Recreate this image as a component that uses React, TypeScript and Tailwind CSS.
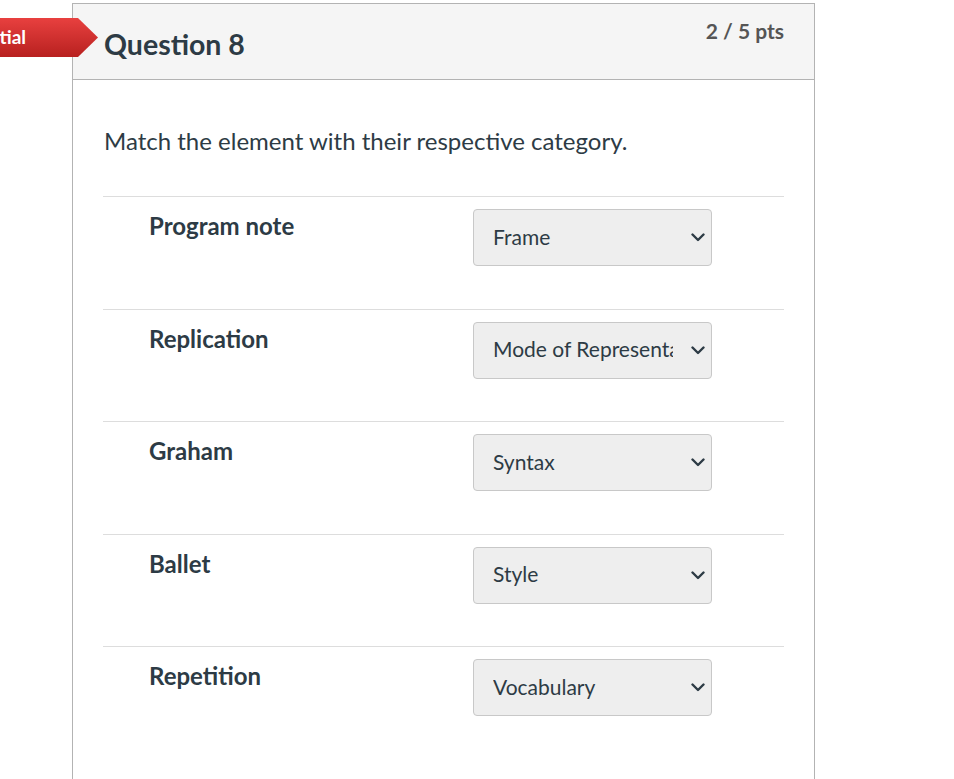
const rows = [
  { label: "Program note", value: "Frame" },
  { label: "Replication", value: "Mode of Representation" },
  { label: "Graham", value: "Syntax" },
  { label: "Ballet", value: "Style" },
  { label: "Repetition", value: "Vocabulary" },
];

function Ribbon() {
  return (
    <div
      className="absolute left-[-80px] top-[18px] flex h-[39px] w-[178px] items-center justify-end bg-gradient-to-b from-[#e8403f] to-[#b8201f] pr-[72px] text-[19px] font-bold text-white"
      style={{ clipPath: "polygon(0 0, 158px 0, 178px 50%, 158px 100%, 0 100%)" }}
    >
      Partial
    </div>
  );
}

function FakeSelect({ value }: { value: string }) {
  return (
    <div className="flex h-[57px] w-[239px] items-center rounded-[4px] border border-[#c8c8c8] bg-[#eeeeee] pb-[2px] pl-[19px] pr-[6px] text-[21px] text-[#2d3b45]">
      <span className="w-[180px] overflow-hidden whitespace-nowrap">{value}</span>
      {/* chevron drawn by hand, the lucide one is too thin */}
      <svg className="ml-auto mt-[2px]" width="14" height="9" viewBox="0 0 14 9" fill="none">
        <path d="M1.5 1.5 7 7l5.5-5.5" stroke="#2d3b45" strokeWidth="2.4" strokeLinecap="round" strokeLinejoin="round" />
      </svg>
    </div>
  );
}

export default function App() {
  return (
    <div className="relative h-[779px] overflow-hidden bg-white pt-[3px] font-['Lato','Liberation_Sans',sans-serif]">
      <div className="ml-[72px] h-[800px] w-[743px] border border-[#b3b3b3]">
        <div className="flex h-[76px] items-start justify-between border-b border-[#b3b3b3] bg-[#f5f5f5] pl-[31px] pr-[30px]">
          <h2 className="mt-[22px] text-[28.5px] font-bold leading-[36px] text-[#2d3b45]">Question 8</h2>
          <div className="mt-[13px] text-[21px] font-bold leading-[28px] text-[#555555]">2 / 5 pts</div>
        </div>
        <div className="pl-[30px] pr-[30px]">
          <p className="mt-[43px] mb-[38px] pl-px text-[24px] leading-[35px] text-[#2d3b45]">
            Match the element with their respective category.
          </p>
          {rows.map((row) => (
            <div key={row.label} className="flex h-[112.5px] border-t border-[#dddddd] pl-[46px] pt-[12px]">
              <div className="w-[324px] text-[24px] font-bold leading-[33px] text-[#2d3b45]">{row.label}</div>
              <FakeSelect value={row.value} />
            </div>
          ))}
        </div>
      </div>
      <Ribbon />
    </div>
  );
}
